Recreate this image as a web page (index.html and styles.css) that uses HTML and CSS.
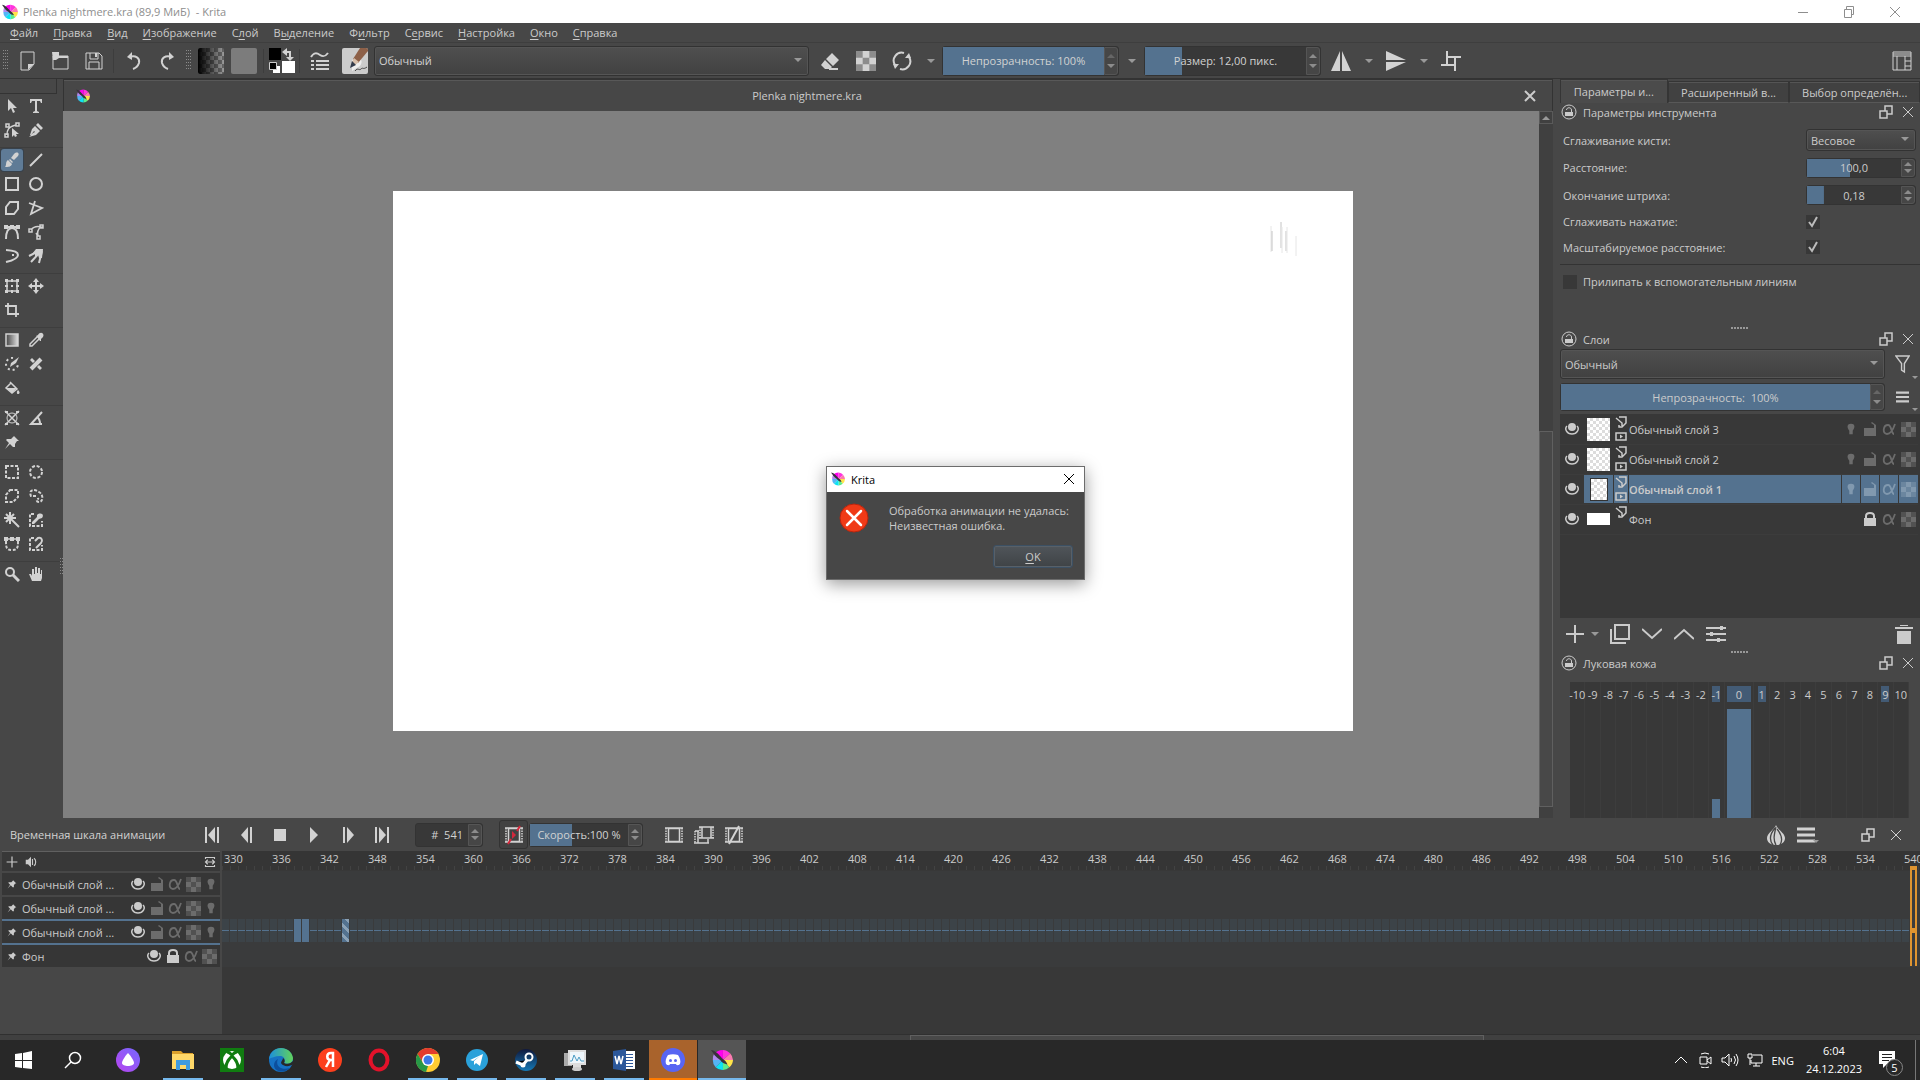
FILE: index.html
```html
<!DOCTYPE html>
<html lang="ru">
<head>
<meta charset="UTF-8">
<meta name="viewport" content="width=device-width, initial-scale=1.0">
<title>Plenka nightmere.kra (89,9 МиБ) - Krita</title>
<link rel="stylesheet" href="styles.css">
</head>
<body>
<!-- shared icons -->
<svg class="defs" aria-hidden="true">
  <defs>
    <linearGradient id="gray"><stop offset="0" stop-color="#444"/><stop offset="1" stop-color="#ddd"/></linearGradient>
    <linearGradient id="black"><stop offset="0" stop-color="#000"/><stop offset="1" stop-color="#000" stop-opacity="0"/></linearGradient>
    <linearGradient id="violet" x1="0" y1="1" x2="1" y2="0"><stop offset="0" stop-color="#b844ee"/><stop offset="1" stop-color="#7468ff"/></linearGradient>
    <linearGradient id="edgeg" x1="0" y1="0" x2="1" y2="0"><stop offset="0" stop-color="#1b8fdd"/><stop offset="1" stop-color="#62d35a"/></linearGradient>
    <linearGradient id="steamg" x1="0" y1="0" x2="0" y2="1"><stop offset="0" stop-color="#10183c"/><stop offset="1" stop-color="#1579b5"/></linearGradient>
    <pattern id="checks" width="8" height="8" patternUnits="userSpaceOnUse"><path fill="#9a9a9a" d="M0 0h8v8H0z"/><path fill="#666" d="M0 0h4v4H0zM4 4h4v4H4z"/></pattern>
  </defs>
  <symbol id="krita" viewBox="0 0 24 24">
    <path fill="#f0e" d="M13 12 3 6a12 11 0 0 1 10-5z"/><path fill="#f3d" d="M13 12V1a11 11 0 0 1 8 4z"/><path fill="#fb7bb0" d="m13 12 8-7a11 11 0 0 1 3 7z"/>
    <path fill="#ffe34a" d="M13 12h11a11 11 0 0 1-4 8z"/><path fill="#5dec8a" d="m13 12 7 8a11 11 0 0 1-7 3z"/><path fill="#0ee3f4" d="M13 12v11a11 11 0 0 1-8-3z"/><path fill="#55b4f5" d="m13 12-8 8a11 11 0 0 1-3-8z"/><path fill="#b08af0" d="M13 12H2a11 11 0 0 1 1-6z"/>
    <path fill="#38323c" d="M0 1c4 0 9 5 12 9 3 2 5 4 6 7-4-1-6-2-8-5C5 9 3 5 0 1z"/>
  </symbol>
  <symbol id="new" viewBox="0 0 20 20"><path d="M3 1h13v12l-5 6H3z"/><path class="f" d="M10 19v-6h6z"/></symbol>
  <symbol id="open" viewBox="0 0 20 20"><path d="M2 5h15v13H2z"/><path class="f" d="M1 1h7v4h9v2H8L5 9H2z"/></symbol>
  <symbol id="save" viewBox="0 0 20 20"><path d="M2 2h13l3 3v13H2zM5 18v-7h10v7M6 2v6h8V2"/><path class="f" d="M11 2h2v4h-2z"/></symbol>
  <symbol id="undo" viewBox="0 0 20 20"><path stroke-width="2" d="M5 6c7-2 11 1 10 6-1 3-3 5-6 6"/><path class="f" d="M8 1v8L3 6z"/></symbol>
  <symbol id="redo" viewBox="0 0 20 20"><path stroke-width="2" d="M15 6C8 4 4 7 5 12c1 3 3 5 6 6"/><path class="f" d="M12 1v8l5-3z"/></symbol>
  <symbol id="brushset" viewBox="0 0 20 20"><path stroke-width="2" d="M1 6c3-5 6-4 9-2 3 2 5 2 8-2M6 10h13M6 14h13M6 18h13M1 10h3M1 14h3M1 18h3"/></symbol>
  <symbol id="eraser" viewBox="0 0 20 20"><path class="f" d="m12 2 7 7-6 6-7-7zM5 9l7 7-2 2H5l-4-4zM9 17h9v2H9z"/></symbol>
  <symbol id="checker" viewBox="0 0 15 15"><path class="f" opacity=".5" d="M0 0h15v15H0z"/><path class="f" d="M5 0h5v5H5zM0 5h5v5H0zM10 5h5v5h-5zM5 10h5v5H5z"/></symbol>
  <symbol id="reload" viewBox="0 0 20 20"><path stroke-width="2" d="M3 14A8 8 0 0 1 12 2M17 6A8 8 0 0 1 8 18"/><path class="f" d="m1 13 6 0-4 5zM19 7l-6 0 4-5z"/></symbol>
  <symbol id="mirrorh" viewBox="0 0 20 20"><path class="f" d="M9 0v20H0zM11 0v20h9z"/></symbol>
  <symbol id="mirrorv" viewBox="0 0 20 20"><path class="f" d="M0 0v9h20zM0 20v-9h20z"/></symbol>
  <symbol id="wrap" viewBox="0 0 20 20"><path stroke-width="2" d="M6 0v14M0 14h14M6 6h14M14 6v14"/></symbol>
  <symbol id="workspace" viewBox="0 0 20 20"><path d="M1 1h18v18H1zM1 5h18M5 5v14M13 5v14M13 10h6M13 15h6M1 3h18"/></symbol>
  <symbol id="min" viewBox="0 0 12 12"><path d="M1 6.5h10"/></symbol>
  <symbol id="max" viewBox="0 0 12 12"><path d="M1.500 3.500h7v8h-7zM3.500 3V.5h7v8H9"/></symbol>
  <symbol id="close" viewBox="0 0 12 12"><path d="m1 1 10 10M11 1 1 11"/></symbol>
  <symbol id="float" viewBox="0 0 16 16"><path stroke-width="1.500" d="M2 7h7v7H2zM7 7V2h7v8H9"/></symbol>
  <symbol id="docklock" viewBox="0 0 16 16"><circle cx="8" cy="8" r="7"/><path class="f" d="M4 8h8v4H4z"/><path d="M5.500 6c0-3 5-3 5 0v2"/></symbol>
  <symbol id="select" viewBox="0 0 16 16"><path class="f" d="M4 1v12l3-3 2 5 2-1-2-4h4z"/></symbol>
  <symbol id="text" viewBox="0 0 16 16"><path class="f" d="M2 1h12v4h-1l-1-2H9v10l2 1v1H5v-1l2-1V3H4L3 5H2z"/></symbol>
  <symbol id="shape" viewBox="0 0 16 16"><path stroke-width="1.500" d="M3 13c0-5 1-8 9-10M1 12h3v3H1zM2 2h3v3H2zM12 1h3v3h-3z"/><path class="f" d="M8 6v9l2-2 1 2 2-1-1-2h3z"/></symbol>
  <symbol id="pen" viewBox="0 0 16 16"><path class="f" d="M10 1 15 6l-2 2-5-5zM7 4l5 5-4 4-7 2 4-4 2-1-1-1-3 4-1 0 2-6z"/></symbol>
  <symbol id="brush" viewBox="0 0 16 16"><path class="f" d="M10 2c3-3 6-1 4 2l-4 4-3-2zM6 7l3 3-1 1-3-3zM4 8l4 4c-1 3-4 3-7 3 2-2 0-5 3-7z"/></symbol>
  <symbol id="line" viewBox="0 0 16 16"><path stroke-width="2" d="M2 14 14 2"/></symbol>
  <symbol id="rect" viewBox="0 0 16 16"><path stroke-width="2" d="M2 2h12v12H2z"/></symbol>
  <symbol id="ellipse" viewBox="0 0 16 16"><circle cx="8" cy="8" r="6" stroke-width="2"/></symbol>
  <symbol id="polygon" viewBox="0 0 16 16"><path stroke-width="2" d="m6 2 8 0v7l-4 5H2V7z"/></symbol>
  <symbol id="polyline" viewBox="0 0 16 16"><path stroke-width="1.800" d="M1 3 14 8 3 14 7 1"/></symbol>
  <symbol id="bezier" viewBox="0 0 16 16"><path stroke-width="2" d="M2 15c0-8 2-11 6-11s6 3 6 11M1 3h14"/><path class="f" d="M0 1h4v4H0zM6 1h4v4H6zM12 1h4v4h-4z"/></symbol>
  <symbol id="freepath" viewBox="0 0 16 16"><path stroke-width="1.500" d="M3 6c3-4 6-4 10-3-3 2-4 5-3 9L8 9M1 5h3v3H1zM12 1h3v3h-3zM9 12h3v3H9z"/></symbol>
  <symbol id="dyna" viewBox="0 0 16 16"><path stroke-width="2" d="M2 2c16 1 16 8 0 12"/><path class="f" d="M8 6h2v2H8z"/></symbol>
  <symbol id="multi" viewBox="0 0 16 16"><path stroke-width="2" d="m1 8 12-6M3 14 14 2M11 15l3-12"/><path class="f" d="m8 1 7 0-1 9-3 0-1-3-3 3 0-4-3 0z"/></symbol>
  <symbol id="transform" viewBox="0 0 16 16"><path stroke-width="1.500" d="M3 3h10v10H3z"/><path class="f" d="M1 1h3v3H1zM12 1h3v3h-3zM1 12h3v3H1zM12 12h3v3h-3zM7 1h2v3H7zM7 12h2v3H7zM1 7h3v2H1zM12 7h3v2h-3zM7 7h2v2H7z"/></symbol>
  <symbol id="move" viewBox="0 0 16 16"><path stroke-width="2" d="M8 2v12M2 8h12"/><path class="f" d="m8 0 3 4H5zM8 16l3-4H5zM0 8l4-3v6zM16 8l-4-3v6z"/></symbol>
  <symbol id="crop" viewBox="0 0 16 16"><path stroke-width="1.800" d="M4 1v11h11M1 4h11v11"/></symbol>
  <symbol id="gradient" viewBox="0 0 16 16"><path fill="url(#gray)" d="M2 2h12v12H2z" stroke-width="1.500"/></symbol>
  <symbol id="picker" viewBox="0 0 16 16"><path stroke-width="1.500" d="m9 5-7 7v2h2l7-7"/><path class="f" d="m8 4 2-1c2-4 7-2 5 2l-2 2 0 2-1 0z"/></symbol>
  <symbol id="colorize" viewBox="0 0 16 16"><path stroke-width="2" stroke-dasharray="2 3" d="M9 2a6 6 0 1 0 5 6"/><path class="f" d="m15 1-3 6-3 2-3 2 1-4z"/></symbol>
  <symbol id="patch" viewBox="0 0 16 16"><path stroke-width="4" d="m3 13 10-10"/><path class="f" d="m2 4 2-2 3 3-2 2zM14 12l-2 2-3-3 2-2z"/></symbol>
  <symbol id="fill" viewBox="0 0 16 16"><path stroke-width="1.500" d="m6 2 7 7-5 4-6-5 5-5"/><path class="f" d="M2 8h11l-5 5zM14 10c3 3 1 4 0 4s-2-2 0-4z"/></symbol>
  <symbol id="assist" viewBox="0 0 16 16"><path stroke-width="1.500" d="m1 1 14 14M15 1 1 15"/><circle cx="8" cy="8" r="5"/><path class="f" d="M1 1h3v2H1zM12 1h3v2h-3zM1 13h3v2H1zM12 13h3v2h-3z"/></symbol>
  <symbol id="measure" viewBox="0 0 16 16"><path stroke-width="2" d="M14 2 3 14h11M9 7c3 2 3 4 3 7"/></symbol>
  <symbol id="pin" viewBox="0 0 16 16"><path class="f" d="m9 1 6 6-2 0-2 3 0 3-2 0-3-3-5 5 4-6-3-3 1-1 4 0 3-3z"/></symbol>
  <symbol id="selrect" viewBox="0 0 16 16"><path stroke-width="2" stroke-dasharray="3 1.500" d="M2 2h12v12H2z"/></symbol>
  <symbol id="selell" viewBox="0 0 16 16"><circle cx="8" cy="8" r="6" stroke-width="2" stroke-dasharray="3 1.700"/></symbol>
  <symbol id="selpoly" viewBox="0 0 16 16"><path stroke-width="2" stroke-dasharray="3 1.500" d="M6 2h8v7l-5 5H2V7z"/></symbol>
  <symbol id="selfree" viewBox="0 0 16 16"><path stroke-width="2" stroke-dasharray="3 1.500" d="M8 8H3c-3-7 4-7 8-4 5 3 4 10 0 10-3 0-3-4 0-3"/></symbol>
  <symbol id="wand" viewBox="0 0 16 16"><path stroke-width="2" d="M6 0v12M0 6h12M2 2l13 13M10 2l-8 8"/></symbol>
  <symbol id="selsim" viewBox="0 0 16 16"><path stroke-width="2" stroke-dasharray="3 1.500" d="M6 2H2v12h12V9"/><path class="f" d="M4 10 9 5l0-2c3-3 8-1 5 3l-3 1-5 5H4z"/></symbol>
  <symbol id="selbez" viewBox="0 0 16 16"><path stroke-width="2" stroke-dasharray="3 1.500" d="M2 5c0 6 0 9 6 9s6-3 6-9"/><path stroke-width="1.500" d="M1 3h14"/><path class="f" d="M0 1h4v4H0zM6 1h4v4H6zM12 1h4v4h-4z"/></symbol>
  <symbol id="selmag" viewBox="0 0 16 16"><path stroke-width="2" stroke-dasharray="3 1.500" d="M6 2H2v12h12V9"/><path stroke-width="2" d="m7 5 3-3c4-1 5 3 3 5l-5 5"/></symbol>
  <symbol id="zoomt" viewBox="0 0 16 16"><circle cx="6" cy="6" r="4" stroke-width="2"/><path stroke-width="3" d="m9 9 6 6"/></symbol>
  <symbol id="hand" viewBox="0 0 16 16"><path class="f" d="M4 15 1 8l2 0 1 2V3h2v5l1 0V1h2v6l1 0V2h2v6l1 0V4h1v8l-1 3z"/></symbol>
  <symbol id="funnel" viewBox="0 0 16 20"><path stroke-width="1.500" d="M1 1h14L10 9v9l-3-2V9z"/></symbol>
  <symbol id="menu" viewBox="0 0 18 16"><path stroke-width="3" d="M0 2h18M0 8h18M0 14h18"/></symbol>
  <symbol id="eye" viewBox="0 0 16 16"><path stroke-width="1.500" d="M3 5C0 8 3 13 8 13s8-5 5-8"/><circle class="f" cx="8" cy="6" r="4"/></symbol>
  <symbol id="paint" viewBox="0 0 12 12"><path stroke-width="1.500" d="M4 1h7v6l-4 4H4V9M1 2l6 5v3"/></symbol>
  <symbol id="anim" viewBox="0 0 12 9"><path stroke-width="1.500" d="M1 1h10v7H1z"/><path class="f" d="M5 2.500 8 4.500 5 6.500z"/></symbol>
  <symbol id="bulb" viewBox="0 0 10 14"><path class="f" d="M5 1c6 0 4 6 2 8v4H3V9C1 7-1 1 5 1z"/></symbol>
  <symbol id="unlock" viewBox="0 0 14 14"><path class="f" d="M1 6h10V3L8 1l1-1 4 3v11H1z"/></symbol>
  <symbol id="lock" viewBox="0 0 14 14"><path class="f" d="M1 6h12v8H1z"/><path stroke-width="2" d="M3 7V4c0-4 8-4 8 0v3"/></symbol>
  <symbol id="alpha" viewBox="0 0 14 14"><path stroke-width="1.800" d="M13 2c-2 6-5 10-8 10-5 0-4-9 1-9 4 0 3 9 6 9"/></symbol>
  <symbol id="plus" viewBox="0 0 20 20"><path stroke-width="2" d="M10 1v18M1 10h18"/></symbol>
  <symbol id="dup" viewBox="0 0 20 20"><path stroke-width="2" d="M5 1h14v14H5zM1 5v14h15"/></symbol>
  <symbol id="down" viewBox="0 0 20 20"><path stroke-width="2" d="m0 5 10 9 10-9"/></symbol>
  <symbol id="up" viewBox="0 0 20 20"><path stroke-width="2" d="m0 15 10-9 10 9"/></symbol>
  <symbol id="props" viewBox="0 0 20 20"><path stroke-width="2" d="M0 4h20M0 10h20M0 16h20"/><path class="f" d="M14 2h3v4h-3zM4 8h3v4H4zM11 14h3v4h-3z"/></symbol>
  <symbol id="trash" viewBox="0 0 20 20"><path class="f" d="M1 3h18v2H1zM6 1h8v1H6zM3 7h14v13H3z"/></symbol>
  <symbol id="first" viewBox="0 0 16 16"><path class="f" d="M1 0h2v16H1zM13 0h2v16h-2zM11 0v16L4 8z"/></symbol>
  <symbol id="prev" viewBox="0 0 16 16"><path class="f" d="M12 0h2v16h-2zM10 0v16L3 8z"/></symbol>
  <symbol id="stop" viewBox="0 0 16 16"><path class="f" d="M2 2h12v12H2z"/></symbol>
  <symbol id="play" viewBox="0 0 16 16"><path class="f" d="m4 0 8 8-8 8z"/></symbol>
  <symbol id="next" viewBox="0 0 16 16"><path class="f" d="M3 0h2v16H3zM7 0l7 8-7 8z"/></symbol>
  <symbol id="last" viewBox="0 0 16 16"><path class="f" d="M13 0h2v16h-2zM1 0h2v16H1zM5 0l7 8-7 8z"/></symbol>
  <symbol id="film" viewBox="0 0 18 16"><path stroke-width="1.500" d="M3.500 1.500h11v13h-11zM0 1h18M0 15h18"/><path stroke-width="1.500" stroke-dasharray="1.500 1" d="M1 1v14M17 1v14"/></symbol>
  <symbol id="film2" viewBox="0 0 20 18"><path stroke-width="1.500" d="M8 1h9v11H8zM5 1h15M5 12h15M5 5H1M0 17h15M4 5v12M14 13v4"/><path stroke-width="1.500" stroke-dasharray="1.500 1" d="M6 1v11M19 1v11M1 5v12"/></symbol>
  <symbol id="onion" viewBox="0 0 20 20"><path class="f" d="M10 0c1 4 9 8 9 13 0 4-3 7-9 7s-9-3-9-7C1 8 9 4 10 0z"/><path stroke="#474747" stroke-width="1.300" d="M9 3C4 9 3 15 7 20M10 2c-2 8-3 13 0 18M11 4c5 6 6 11 3 16"/></symbol>
  <symbol id="sound" viewBox="0 0 16 16"><path class="f" d="M1 5h3l4-4v14l-4-4H1z"/><path stroke-width="1.500" d="M10 4v8M12 3c3 2 3 8 0 10"/></symbol>
  <symbol id="fit" viewBox="0 0 16 16"><path stroke-width="1.500" d="M2 4V2h12v2M2 12v2h12v-2M2 8h12M5 5 2 8l3 3M11 5l3 3-3 3"/></symbol>
</svg>

<header class="titlebar">
  <svg class="i i16"><use href="#krita"/></svg>
  <span>Plenka nightmere.kra (89,9 МиБ)&nbsp; - Krita</span>
  <div class="window-buttons">
    <button title="Свернуть"><svg class="i i12"><use href="#min"/></svg></button>
    <button title="Развернуть"><svg class="i i12"><use href="#max"/></svg></button>
    <button title="Закрыть"><svg class="i i12"><use href="#close"/></svg></button>
  </div>
</header>

<nav class="menubar">
  <a href="#"><u>Ф</u>айл</a>
  <a href="#"><u>П</u>равка</a>
  <a href="#"><u>В</u>ид</a>
  <a href="#"><u>И</u>зображение</a>
  <a href="#">С<u>л</u>ой</a>
  <a href="#">В<u>ы</u>деление</a>
  <a href="#">Ф<u>и</u>льтр</a>
  <a href="#">С<u>е</u>рвис</a>
  <a href="#"><u>Н</u>астройка</a>
  <a href="#"><u>О</u>кно</a>
  <a href="#"><u>С</u>правка</a>
</nav>

<div class="toolbar">
  <span class="grip"></span>
  <button title="Создать"><svg class="i i20"><use href="#new"/></svg></button>
  <button title="Открыть"><svg class="i i20"><use href="#open"/></svg></button>
  <button title="Сохранить"><svg class="i i20"><use href="#save"/></svg></button>
  <span class="sep"></span>
  <button title="Отменить"><svg class="i i20"><use href="#undo"/></svg></button>
  <button title="Повторить"><svg class="i i20"><use href="#redo"/></svg></button>
  <span class="grip"></span>
  <button title="Градиент"><svg class="swatch"><rect width="26" height="26" fill="url(#checks)"/><rect width="26" height="26" fill="url(#black)"/></svg></button>
  <button title="Текстура"><svg class="swatch"><rect width="26" height="26" fill="#7c7c7c"/></svg></button>
  <span class="sep"></span>
  <button class="colors" title="Цвета">
    <svg width="28" height="28"><path d="M1 1h12v12H1z"/><path fill="#fff" d="M14 14h13v12H14zM5 19h7v7H5z"/><path stroke="#ccc" d="M1.500 15.500h7v7h-7z"/><path stroke="#d2d2d2" stroke-width="2" fill="none" d="M17 5h5v6"/><path fill="#d2d2d2" d="m14 5 5-4v8zM22 14l-4-4h8z"/></svg>
  </button>
  <span class="sep"></span>
  <button title="Параметры кисти"><svg class="i i20"><use href="#brushset"/></svg></button>
  <button class="wide" title="Профиль кисти">
    <svg class="swatch"><path fill="#ccc" d="M0 0h26v26H0z"/><path fill="#eee" d="M10 12c8-4 12 0 8 6l-8 5z"/><path fill="#8d6048" d="M18 0h8v3L16 15l-5-4z"/><path fill="#d8c0ac" d="m12 10 5 4-4 3-3-3z"/><path fill="#333c4c" d="m10 13 4 4-6 3z"/><path fill="none" stroke="#444" d="M13 23c3-4 4 0 6-2s2 1 6-2"/></svg>
  </button>
  <label class="combo blend"><select aria-label="Режим смешивания"><option>Обычный</option></select></label>
  <button class="mid" title="Ластик"><svg class="i i20"><use href="#eraser"/></svg></button>
  <button class="mid" title="Сохранять прозрачность"><svg class="i i20"><use href="#checker"/></svg></button>
  <button class="mid" title="Перезагрузить"><svg class="i i20"><use href="#reload"/></svg></button>
  <span class="drop"></span>
  <label class="slider"><input type="text" aria-label="Непрозрачность" value="Непрозрачность: 100%" style="--fill:100%"><span class="spin off"></span></label>
  <span class="drop large"></span>
  <label class="slider size"><input type="text" aria-label="Размер" value="Размер: 12,00 пикс." style="--fill:23%"><span class="spin"></span></label>
  <button class="mid" title="Отразить по горизонтали"><svg class="i i20"><use href="#mirrorh"/></svg></button>
  <span class="drop small"></span>
  <button class="mid" title="Отразить по вертикали"><svg class="i i20"><use href="#mirrorv"/></svg></button>
  <span class="drop small"></span>
  <button class="mid" title="Циклический режим"><svg class="i i20"><use href="#wrap"/></svg></button>
  <button class="mid end" title="Рабочее пространство"><svg class="i i20"><use href="#workspace"/></svg></button>
</div>

<main class="workspace">
  <aside class="toolbox">
    <div class="toolbox-head"></div>
    <div class="tools" id="tools"></div>
    <span class="grip"></span>
  </aside>

  <section class="document">
    <div class="doc-tab">
      <svg class="i i14"><use href="#krita"/></svg>
      <span>Plenka nightmere.kra</span>
      <button title="Закрыть"><svg class="i i12 bold"><use href="#close"/></svg></button>
    </div>
    <div class="view">
      <div class="canvas">
        <div class="sheet">
          <svg class="strokes" viewBox="0 0 30 36"><path d="M2 5v26M27 15v20"/><path class="dark" d="M3 10v20M12 1v26M17 10v20"/><path d="M13 6v26M18 6v26"/></svg>
        </div>
      </div>
      <div class="vscroll"><span class="arrow"></span><span class="thumb"></span></div>
    </div>
  </section>

  <aside class="docks">
    <div class="tabs">
      <button class="active">Параметры и...</button>
      <button>Расширенный в...</button>
      <button class="last">Выбор определён...</button>
    </div>
    <section class="dock options">
      <h2><svg class="i i16"><use href="#docklock"/></svg>Параметры инструмента<button title="Открепить"><svg class="i i16"><use href="#float"/></svg></button><button title="Закрыть"><svg class="i i12"><use href="#close"/></svg></button></h2>
      <div class="fields">
        <label for="smooth">Сглаживание кисти:</label>
        <span class="combo"><select id="smooth"><option>Весовое</option></select></span>
        <label for="dist">Расстояние:</label>
        <span class="slider"><input id="dist" type="text" value="100,0" style="--fill:46%"><span class="spin"></span></span>
        <label for="finish">Окончание штриха:</label>
        <span class="slider"><input id="finish" type="text" value="0,18" style="--fill:18%"><span class="spin"></span></span>
        <label for="press">Сглаживать нажатие:</label>
        <input id="press" type="checkbox" checked>
        <label for="scale">Масштабируемое расстояние:</label>
        <input id="scale" type="checkbox" checked>
      </div>
      <label class="snap"><input type="checkbox">Прилипать к вспомогательным линиям</label>
    </section>
    <div class="splitter"></div>
    <section class="dock layers">
      <h2><svg class="i i16"><use href="#docklock"/></svg>Слои<button title="Открепить"><svg class="i i16"><use href="#float"/></svg></button><button title="Закрыть"><svg class="i i12"><use href="#close"/></svg></button></h2>
      <div class="layer-row">
        <label class="combo"><select aria-label="Режим смешивания слоя"><option>Обычный</option></select></label>
        <button class="has-drop" title="Фильтр"><svg class="i" width="15" height="19"><use href="#funnel"/></svg></button>
      </div>
      <div class="layer-row opacity">
        <label class="slider"><input type="text" aria-label="Непрозрачность слоя" value="Непрозрачность:&nbsp; 100%" style="--fill:100%"><span class="spin off"></span></label>
        <button class="has-drop" title="Меню"><svg class="i" width="13" height="12"><use href="#menu"/></svg></button>
      </div>
      <ul class="layer-list" id="layers"></ul>
      <div class="layer-actions">
        <button title="Добавить"><svg class="i i20"><use href="#plus"/></svg></button>
        <span class="drop small"></span>
        <button title="Дублировать"><svg class="i i20"><use href="#dup"/></svg></button>
        <button title="Ниже"><svg class="i i20"><use href="#down"/></svg></button>
        <button title="Выше"><svg class="i i20"><use href="#up"/></svg></button>
        <button title="Свойства"><svg class="i i20"><use href="#props"/></svg></button>
        <button class="end" title="Удалить"><svg class="i i20"><use href="#trash"/></svg></button>
      </div>
    </section>
    <div class="splitter"></div>
    <section class="dock onion">
      <h2><svg class="i i16"><use href="#docklock"/></svg>Луковая кожа<button title="Открепить"><svg class="i i16"><use href="#float"/></svg></button><button title="Закрыть"><svg class="i i12"><use href="#close"/></svg></button></h2>
      <div class="skins" id="skins"></div>
    </section>
  </aside>
</main>

<section class="timeline">
  <div class="timeline-bar">
    <h2>Временная шкала анимации</h2>
    <button title="В начало"><svg class="i i16"><use href="#first"/></svg></button>
    <button title="Предыдущий кадр"><svg class="i i16"><use href="#prev"/></svg></button>
    <button title="Стоп"><svg class="i i16"><use href="#stop"/></svg></button>
    <button title="Воспроизвести"><svg class="i i16"><use href="#play"/></svg></button>
    <button title="Следующий кадр"><svg class="i i16"><use href="#next"/></svg></button>
    <button title="В конец"><svg class="i i16"><use href="#last"/></svg></button>
    <label class="slider frame"><input type="text" aria-label="Кадр" value="#&nbsp; 541" style="--fill:0%"><span class="spin"></span></label>
    <button class="dropframes" title="Пропускать кадры"><svg class="i" width="18" height="20" viewBox="0 0 18 20"><use href="#film" y="2" width="18" height="16"/><path class="red" d="m3 19 3-5M12 6l3-5"/><path fill="#d4283c" stroke="none" d="m7 6 4 4-4 4z"/></svg></button>
    <label class="slider speed"><input type="text" aria-label="Скорость" value="Скорость:100 %" style="--fill:43%"><span class="spin"></span></label>
    <button class="cell first" title="Кадр"><svg class="i" width="18" height="16"><use href="#film"/></svg></button>
    <button class="cell" title="Дублировать кадр"><svg class="i" width="20" height="18"><use href="#film2"/></svg></button>
    <button class="cell" title="Удалить кадр"><svg class="i" width="18" height="20" viewBox="0 0 18 20"><use href="#film" y="2" width="18" height="16"/><path stroke-width="2" d="M4 19 14 1"/></svg></button>
    <button class="cell end" title="Луковая кожа"><svg class="i i20"><use href="#onion"/></svg></button>
    <button class="cell has-drop" title="Меню"><svg class="i" width="18" height="16"><use href="#menu"/></svg></button>
    <button class="cell gap" title="Открепить"><svg class="i i16"><use href="#float"/></svg></button>
    <button class="cell close" title="Закрыть"><svg class="i i12"><use href="#close"/></svg></button>
  </div>
  <div class="timeline-body">
    <div class="tracks">
      <div class="tracks-head">
        <svg class="i i12"><use href="#plus"/></svg><svg class="i i12"><use href="#sound"/></svg><svg class="i i12 end"><use href="#fit"/></svg>
      </div>
      <div id="tracks"></div>
    </div>
    <div class="frames">
      <div class="ruler" id="ruler"></div>
      <div class="row"></div>
      <div class="row"></div>
      <div class="row keys" id="keys"></div>
      <div class="row"></div>
      <div class="playhead"></div>
    </div>
  </div>
  <div class="hscroll"><span class="thumb"></span></div>
</section>

<footer class="taskbar">
  <button title="Пуск"><svg width="18" height="18"><path fill="#fff" d="m0 3 7-1v7H0zM8 2l9-2v9H8zM0 10h7v7l-7-1zM8 10h9v8l-9-1z"/></svg></button>
  <button title="Поиск"><svg width="18" height="18"><g fill="none" stroke="#fff" stroke-width="1.500"><circle cx="11" cy="7" r="5.500"/><path d="m7 11-6 6"/></g></svg></button>
  <button class="alice" title="Алиса"><svg width="26" height="26"><circle cx="13" cy="13" r="12" fill="url(#violet)"/><path fill="#fff" d="M13 6c3 3 6 8 6 10 0 4-12 4-12 0 0-2 3-7 6-10z"/></svg></button>
  <button class="run" title="Проводник"><svg width="24" height="24"><path fill="#dba02c" d="M1 3h9l2 2h10v4H1z"/><path fill="#ffd869" d="M1 6h22v15H1z"/><path fill="#3f9be0" d="M5 12h14v10h-4v-5H9v5H5z"/></svg></button>
  <button title="Xbox"><svg width="24" height="24"><path fill="#107c10" d="M0 0h24v24H0z"/><circle cx="12" cy="12" r="9" fill="#fff"/><path fill="none" stroke="#107c10" stroke-width="3" d="M6 20c0-6 3-9 6-12 3 3 6 6 6 12M7 4c2 0 4 2 5 3 1-1 3-3 5-3"/></svg></button>
  <button class="run" title="Edge"><svg width="26" height="26"><circle cx="13" cy="13" r="12" fill="#1672c4"/><path fill="url(#edgeg)" d="M1 12C3-3 23-2 25 11c0 5-5 7-9 5 2-3 0-7-4-7-5 0-9 2-11 3z"/><path fill="#282828" d="M16 16c4 2 7 0 9-2v3c-3 3-10 3-12-1 0-2 2-3 2-5 2 1 2 4 1 5z"/><path fill="#0c4f9d" d="M10 12c-3 6 2 12 12 9-6 6-16 4-16-3 0-3 2-5 4-6z"/></svg></button>
  <button title="Яндекс"><svg width="24" height="24"><circle cx="12" cy="12" r="12" fill="#fc3f1d"/><path fill="none" stroke="#fff" stroke-width="2.500" d="M15 19V5h-2c-5 0-5 7 0 7h2M12 12l-4 7"/></svg></button>
  <button title="Opera"><svg width="24" height="24"><ellipse cx="12" cy="12" rx="8.500" ry="9.500" fill="none" stroke="#e3122a" stroke-width="4"/></svg></button>
  <button class="run" title="Chrome"><svg width="24" height="24"><circle cx="12" cy="12" r="12" fill="#fc3"/><path fill="#e33b2e" d="M1.600 6a12 12 0 0 1 20.800 0H12l-5 9z"/><path fill="#279847" d="M1.600 6 7 15l5 3-2 6A12 12 0 0 1 1.600 6z"/><circle cx="12" cy="12" r="6" fill="#fff"/><circle cx="12" cy="12" r="4.500" fill="#3b78e7"/></svg></button>
  <button class="run" title="Telegram"><svg width="24" height="24"><circle cx="12" cy="12" r="11" fill="#2aa1da"/><path fill="#fff" d="m5 12 13-6-3 12-4-3-2 2v-4l6-5-7 5z"/></svg></button>
  <button class="run" title="Steam"><svg width="24" height="24"><circle cx="12" cy="12" r="11" fill="url(#steamg)"/><circle cx="15" cy="9" r="3.500" fill="none" stroke="#fff" stroke-width="2"/><path stroke="#fff" stroke-width="3" d="m2 14 7 3 4-5"/><circle cx="9" cy="17" r="2.500" fill="#fff"/></svg></button>
  <button class="run" title="Монитор ресурсов"><svg width="24" height="24"><path fill="#aaa" d="M1 5h8v13H1z"/><path fill="#ddd" d="M5 2h18v15H5zM10 17h8v3h-8z"/><path fill="#eef6fb" d="M7 4h14v11H7z"/><path fill="none" stroke="#4a9cc4" d="M7 13h2l2-6 3 6 2-4 2 4h3"/><ellipse cx="14" cy="21" rx="5" ry="2" fill="#ccc"/></svg></button>
  <button class="run word" title="Word"><svg width="24" height="24"><path fill="#fff" d="M12 3h11v18H12z"/><path stroke="#2b579a" d="M14 6.500h7M14 9.500h7M14 12.500h7M14 15.500h7M14 18.500h7"/><path fill="#2b579a" d="m1 3 13-2v22L1 21z"/><path fill="none" stroke="#fff" stroke-width="1.500" d="m3 8 2 8 2-8 2 8 2-8"/></svg></button>
  <button class="run discord" title="Discord"><svg width="24" height="24"><circle cx="12" cy="12" r="12" fill="#5865f2"/><path fill="#fff" d="M7 7c3-1 7-1 10 0 2 3 3 6 2 9-2 2-4 1-4 0H9c0 1-2 2-4 0-1-3 0-6 2-9z"/><circle cx="9.500" cy="12.500" r="1.500" fill="#5865f2"/><circle cx="14.500" cy="12.500" r="1.500" fill="#5865f2"/></svg></button>
  <button class="run current" title="Krita"><svg width="22" height="22"><use href="#krita"/></svg></button>
  <div class="tray">
    <svg width="16" height="16"><path d="m2 11 6-6 6 6"/></svg>
    <svg width="16" height="16"><path d="M3 5h7v7H3zM10 8l4-3v7l-4-3M4 2q4-2 8 0M4 15q4 2 8 0"/></svg>
    <svg width="18" height="16"><path d="M1 6h3l4-4v12l-4-4H1zM10 6q1 2 0 4M13 4q3 4 0 8M15 2q4 6 0 12"/></svg>
    <svg width="16" height="16"><path d="M6 3h9v8H4V8M1 2h4v4H1zM3 6v7M6 14h7M9 11v3"/></svg>
    <span>ENG</span>
    <time>6:04<br>24.12.2023</time>
    <button class="notes" title="Уведомления"><svg width="17" height="17"><path fill="#fff" stroke="none" d="M0 0h16v13H8l-4 4v-4H0z"/><path stroke="#222" d="M3 3.500h10M3 6.500h10M3 9.500h7"/></svg><span>5</span></button>
  </div>
</footer>

<div class="dialog" role="alertdialog" aria-labelledby="dialog-title">
  <div class="dialog-title"><svg class="i i14"><use href="#krita"/></svg><span id="dialog-title">Krita</span><button title="Закрыть"><svg class="i i12"><use href="#close"/></svg></button></div>
  <div class="dialog-body">
    <svg width="30" height="30"><circle cx="15" cy="15" r="14" fill="#f03a17" stroke="#b8250e"/><path stroke="#fff" stroke-width="2.500" stroke-linecap="round" d="m8 8 14 14M22 8 8 22"/></svg>
    <p>Обработка анимации не удалась:<br>Неизвестная ошибка.</p>
    <button class="ok"><u>O</u>K</button>
  </div>
</div>
<script src="script.js"></script>
</body>
</html>
```
FILE: script.js
```js
const icon = (name, cls) => `<svg class="i ${cls}"><use href="#${name}"/></svg>`;

// toolbox, one array per group
const groups = [
  ['select', 'text', 'shape', 'pen'],
  ['brush', 'line', 'rect', 'ellipse', 'polygon', 'polyline', 'bezier', 'freepath', 'dyna', 'multi'],
  ['transform', 'move', 'crop'],
  ['gradient', 'picker', 'colorize', 'patch', 'fill'],
  ['assist', 'measure', 'pin'],
  ['selrect', 'selell', 'selpoly', 'selfree', 'wand', 'selsim', 'selbez', 'selmag'],
  ['zoomt', 'hand']
];
document.getElementById('tools').innerHTML = groups.map(group =>
  '<div class="group">' + group.map(t =>
    `<button class="${t === 'brush' ? 'active' : ''}" aria-label="${t}">${icon(t, 'i16')}</button>`).join('') + '</div>'
).join('');

// layers docker
const layers = [
  { name: 'Обычный слой 3' },
  { name: 'Обычный слой 2' },
  { name: 'Обычный слой 1', active: true },
  { name: 'Фон', locked: true }
];
document.getElementById('layers').innerHTML = layers.map(l => `
  <li class="${l.active ? 'active' : ''}">
    <span>${icon('eye', 'i16')}</span>
    <span class="preview"><i class="${l.locked ? 'solid' : l.active ? 'narrow' : ''}"></i></span>
    <span class="kind">${icon('paint', 'k1')}${l.locked ? '' : icon('anim', 'k2')}</span>
    <span class="name">${l.name}</span>
    <span class="dim">${l.locked ? '' : icon('bulb', 'i12')}</span>
    <span class="${l.locked ? '' : 'dim'}">${icon(l.locked ? 'lock' : 'unlock', 'i14')}</span>
    <span class="dim">${icon('alpha', 'i14')}</span>
    <span class="dim">${icon('checker', 'i15')}</span>
  </li>`).join('');

// timeline headers
document.getElementById('tracks').innerHTML = layers.map(l => `
  <div class="track ${l.active ? 'active' : ''}">
    ${icon('pin', 'i10')}<span>${l.locked ? l.name : 'Обычный слой ...'}</span>
    ${icon('eye', 'i16')}${icon(l.locked ? 'lock' : 'unlock', l.locked ? 'i14' : 'i14 dim')}
    ${icon('alpha', 'i14 dim')}${icon('checker', 'i15 dim')}${l.locked ? '' : icon('bulb', 'i12 dim')}
  </div>`).join('');

// onion skins
const visible = [-1, 0, 1, 9];
let skins = '';
for (let n = -10; n <= 10; n++) {
  const height = n === 0 ? 100 : n === -1 ? 17 : 0;
  skins += `<div class="${n === 0 ? 'zero' : ''}"><button class="${visible.includes(n) ? 'on' : ''}"><span>${n}</span></button><div class="level"><i style="height:${height}%"></i></div></div>`;
}
document.getElementById('skins').innerHTML = skins;

// frame numbers
let ruler = '';
for (let f = 330; f <= 540; f += 6) {
  ruler += `<span>${f}</span>`;
}
document.getElementById('ruler').innerHTML = ruler;

let keys = '';
for (let f = 330; f < 541; f++) {
  keys += `<i class="${f === 339 || f === 340 ? 'key' : f === 345 ? 'hold' : ''}"></i>`;
}
document.getElementById('keys').innerHTML = keys;
```
FILE: styles.css
```css
* {
  box-sizing: border-box;
}
body {
  margin: 0;
  height: 100vh;
  display: grid;
  grid-template-rows: 23px 20px 36px 1fr 222px 40px;
  grid-template-columns: 100%;
  overflow: hidden;
  position: relative;
  background: #474747;
  color: #cbcbcb;
  font: 11px/15px "Open Sans", "Noto Sans", sans-serif;
}
button, input, select {
  font: inherit;
  color: inherit;
  border: 0;
  padding: 0;
  margin: 0;
  background: none;
}
button {
  display: flex;
  align-items: center;
  justify-content: center;
}
h2, p, ul {
  margin: 0;
  padding: 0;
  font-size: 11px;
  font-weight: normal;
  list-style: none;
}

/* icons */
.defs {
  position: absolute;
  width: 0;
  height: 0;
}
.i {
  fill: none;
  stroke: currentColor;
  flex: none;
}
.f {
  fill: currentColor;
  stroke: none;
}
#krita path {
  stroke: none;
}
.i10 { width: 10px; height: 10px; }
.i12 { width: 12px; height: 12px; }
.i14 { width: 14px; height: 14px; }
.i15 { width: 15px; height: 15px; }
.i16 { width: 16px; height: 16px; }
.i20 { width: 20px; height: 20px; }
.bold { stroke-width: 2px; }
.dim { color: #6c6c6c; }
.end { margin-left: auto; }
.red { stroke: #d4283c; stroke-width: 2px; }

/* title and menu */
.titlebar {
  display: flex;
  align-items: center;
  gap: 5px;
  padding-left: 2px;
  background: #fff;
  color: #8e8e8e;
}
.window-buttons {
  display: flex;
  margin-left: auto;
  margin-right: 2px;
}
.window-buttons button {
  width: 46px;
}
.menubar {
  display: flex;
  align-items: center;
  gap: 15px;
  padding: 0 10px;
  border-bottom: 1px solid #3e3e3e;
}
.menubar a {
  color: inherit;
  text-decoration: none;
}
u {
  text-underline-offset: 2px;
}

/* toolbar */
.toolbar {
  display: flex;
  align-items: center;
  color: #d2d2d2;
  border-bottom: 1px solid #333;
}
.toolbar > button {
  width: 33px;
  height: 30px;
  flex: none;
}
.toolbar > .mid {
  width: 36px;
}
.toolbar > .wide {
  width: 38px;
}
.toolbar > .colors {
  width: 29px;
}
.grip {
  flex: none;
  width: 5px;
  height: 21px;
  margin: 0 3px;
  background: repeating-linear-gradient(transparent 0 1px, #474747 1px 3px), repeating-linear-gradient(90deg, #8a8a8a 0 1px, transparent 1px 2px);
}
.sep {
  width: 7px;
  height: 24px;
  flex: none;
  background: linear-gradient(#3d3d3d, #3d3d3d) center / 1px 100% no-repeat;
}
.swatch {
  width: 26px;
  height: 26px;
  border-radius: 2px;
}
.drop {
  width: 22px;
  flex: none;
  display: flex;
  justify-content: center;
}
.drop::after, .combo::after, .has-drop::after {
  content: "";
  border: 4px solid transparent;
  border-top: 4px solid #999;
  border-bottom: 0;
}
.drop.small {
  width: 19px;
}
.drop.large {
  width: 25px;
}
.combo {
  position: relative;
  display: flex;
  height: 30px;
  background: linear-gradient(#4f4f4f, #414141);
  border: 1px solid #323232;
  border-radius: 3px;
  box-shadow: inset 0 0 0 1px #555;
}
.combo select {
  appearance: none;
  width: 100%;
  padding: 0 4px;
}
.combo::after {
  position: absolute;
  right: 6px;
  top: calc(50% - 3px);
}
.blend {
  width: 435px;
  margin-right: 3px;
}
.slider {
  display: flex;
  height: 30px;
  border: 1px solid #333;
  border-radius: 3px;
  background: #383838;
}
.slider input {
  flex: 1;
  min-width: 0;
  text-align: center;
  background: linear-gradient(#54728f, #54728f) 0 0 / var(--fill) 100% no-repeat;
}
.spin {
  width: 14px;
  flex: none;
  display: flex;
  flex-direction: column;
  align-items: center;
  justify-content: center;
  gap: 6px;
  background: #464646;
  border: 1px solid #555;
  border-radius: 0 3px 3px 0;
}
.spin::before, .spin::after {
  content: "";
  border: 4px solid transparent;
  border-bottom: 4px solid #8c8c8c;
  border-top: 0;
}
.spin::after {
  border-top: 4px solid #8c8c8c;
  border-bottom: 0;
}
.spin.off::before {
  border-bottom-color: #666;
}
.toolbar .slider {
  width: 177px;
}
.toolbar .size {
  margin-right: 2px;
}

/* workspace */
.workspace {
  display: grid;
  grid-template-columns: 63px 1fr 367px;
  min-height: 0;
}
.toolbox {
  position: relative;
  color: #d2d2d2;
}
.toolbox > .grip {
  position: absolute;
  right: 0;
  bottom: 242px;
  margin: 0;
  width: 3px;
  height: 18px;
}
.toolbox-head {
  width: 57px;
  height: 15px;
  border: 1px solid #333;
  border-width: 0 1px 1px 0;
}
.group {
  display: grid;
  grid-template-columns: 24px 24px;
  grid-auto-rows: 24px;
}
.group + .group {
  margin-top: 5px;
  border-top: 1px solid #3e3e3e;
}
.group button {
  border-radius: 3px;
}
.group .active {
  margin: 1px;
  background: #5f7b96;
  box-shadow: 0 0 0 1px #38424c;
}
.document {
  display: flex;
  flex-direction: column;
  min-width: 0;
}
.doc-tab {
  flex: none;
  display: flex;
  align-items: center;
  justify-content: space-between;
  height: 32px;
  padding: 0 16px 0 12px;
  border: 1px solid #333;
  border-bottom: 0;
  box-shadow: inset 0 1px #585858;
}
.view {
  flex: 1;
  display: flex;
  min-height: 0;
}
.canvas {
  flex: 1;
  position: relative;
  overflow: hidden;
  background: #808080;
}
.sheet {
  position: absolute;
  left: 330px;
  top: 80px;
  width: 960px;
  height: 540px;
  background: #fff;
}
.strokes {
  position: absolute;
  right: 54px;
  top: 30px;
  width: 30px;
  height: 36px;
  stroke: #e6e6e6;
}
.strokes .dark {
  stroke: #c4c4c4;
}
.vscroll {
  width: 14px;
  background: #404040;
  display: flex;
  flex-direction: column;
}
.vscroll .arrow {
  height: 13px;
  border: 1px solid #5a5a5a;
  display: flex;
  align-items: center;
  justify-content: center;
}
.vscroll .arrow::after {
  content: "";
  border: 4px solid transparent;
  border-bottom: 4px solid #999;
  border-top: 0;
}
.vscroll .thumb {
  margin: auto 0 11px;
  height: 376px;
  background: #484848;
  border: 1px solid #606060;
}

/* dockers */
.docks {
  display: flex;
  flex-direction: column;
  min-height: 0;
  padding-left: 7px;
}
.tabs {
  display: flex;
  align-items: flex-end;
  height: 24px;
  flex: none;
}
.tabs button {
  flex: 1 1 121px;
  height: 22px;
  background: #414141;
  border: 1px solid #353535;
  border-bottom-color: #585858;
  box-shadow: inset 0 1px #555;
  white-space: nowrap;
}
.tabs .last {
  flex-basis: 130px;
}
.tabs .active {
  flex-basis: 107px;
  height: 24px;
  background: #4b4b4b;
  border-bottom: 0;
}
.dock h2 {
  display: flex;
  align-items: center;
  gap: 6px;
  height: 18px;
  padding: 0 4px 0 1px;
}
.dock h2 button:first-of-type {
  margin-left: auto;
}
.dock h2 button {
  min-width: 16px;
}
.options {
  flex: none;
  height: 222px;
}
.fields {
  display: grid;
  grid-template-columns: 1fr 110px;
  grid-template-rows: 28px 27px 28px 25px 26px;
  align-items: center;
  padding: 5px 4px 4px 3px;
  border-bottom: 1px solid #333;
  margin-bottom: 9px;
}
.fields .combo {
  height: 22px;
}
.fields .slider {
  height: 20px;
}
.fields .spin {
  gap: 3px;
}
input[type="checkbox"] {
  appearance: none;
  width: 14px;
  height: 14px;
  background: #383838;
}
input[type="checkbox"]:checked {
  background: #383838 url("data:image/svg+xml,%3Csvg xmlns='http://www.w3.org/2000/svg' viewBox='0 0 14 14'%3E%3Cpath fill='none' stroke='%23bbb' stroke-width='2' d='m3 7 3 4 5-9'/%3E%3C/svg%3E");
}
.snap {
  display: flex;
  align-items: center;
  gap: 6px;
  padding-left: 3px;
}
.splitter {
  flex: none;
  height: 5px;
  background: repeating-linear-gradient(90deg, #999 0 2px, transparent 2px 3px) center / 18px 2px no-repeat;
}
.layers {
  flex: none;
}
.layer-row {
  display: flex;
  height: 32px;
  padding: 1px 0;
}
.layer-row.opacity {
  height: 34px;
  padding: 3px 0;
}
.layer-row .combo, .layer-row .slider {
  flex: 1;
  height: auto;
}
.layer-row button {
  width: 35px;
}
.has-drop {
  position: relative;
}
.has-drop::after {
  position: absolute;
  right: 2px;
  bottom: 0;
  border-width: 3px;
  border-bottom: 0;
}
.layer-list {
  height: 204px;
  padding-top: 1px;
  padding-right: 2px;
  background: #383838;
}
.layer-list li {
  display: grid;
  grid-template-columns: 23px 29px 14px 1fr 18px 18px 18px 19px;
  column-gap: 1px;
  height: 30px;
  padding-bottom: 1px;
  border-bottom: 1px solid #3c3c3c;
}
.layer-list span {
  display: flex;
  align-items: center;
  justify-content: center;
}
.layer-list .name {
  justify-content: flex-start;
}
.layer-list .active span:not(:first-child) {
  background: #54728f;
}
.layer-list .active .dim {
  color: #8199af;
}
.layer-list .active .name {
  font-weight: 600;
}
.preview i {
  width: 23px;
  height: 23px;
  background: repeating-conic-gradient(#dcdcdc 0 25%, #fff 0 50%) 0 0 / 6px 6px;
}
.preview .narrow {
  width: 18px;
  border: 1px solid #333;
}
.preview .solid {
  height: 12px;
  background: #fff;
}
.layer-list .kind {
  flex-direction: column;
  justify-content: flex-start;
  gap: 4px;
  padding-top: 1px;
}
.k1 { width: 12px; height: 12px; }
.k2 { width: 12px; height: 9px; }
.layer-actions {
  display: flex;
  align-items: center;
  height: 31px;
  padding-left: 5px;
}
.layer-actions button {
  width: 32px;
}
.layer-actions button:first-child {
  width: 20px;
}
.onion {
  flex: 1;
  display: flex;
  flex-direction: column;
  min-height: 0;
}
.skins {
  flex: 1;
  display: flex;
  margin: 10px 11px 0 10px;
  background: #383838;
}
.skins > div {
  flex: 1 1 0;
  min-width: 0;
  display: flex;
  flex-direction: column;
  align-items: center;
  border-right: 1px solid #3d3d3d;
}
.skins > .zero {
  flex-grow: 2;
}
.skins button {
  width: 8px;
  height: 16px;
  margin: 4px 0 7px;
}
.zero button, .zero i {
  width: 24px;
}
.skins .on {
  background: #435b75;
}
.skins > .zero button {
  width: 24px;
}
.level {
  flex: 1;
  display: flex;
  align-items: flex-end;
}
.level i {
  width: 8px;
  background: #54728f;
}
.zero .level i {
  width: 24px;
}

/* timeline */
.timeline {
  display: flex;
  flex-direction: column;
  min-width: 0;
}
.timeline-bar {
  display: flex;
  align-items: center;
  height: 33px;
  flex: none;
  padding: 0 11px 0 10px;
  color: #d2d2d2;
}
.timeline-bar h2 {
  width: 185px;
}
.timeline-bar > button {
  width: 34px;
}
.timeline-bar .slider {
  height: 24px;
}
.timeline-bar .spin {
  gap: 3px;
}
.timeline-bar .frame {
  width: 68px;
  margin: 0 16px;
}
.timeline-bar .frame input {
  text-align: right;
  padding-right: 5px;
}
.timeline-bar .speed {
  width: 114px;
  margin-left: 1px;
}
.timeline-bar .dropframes {
  width: 29px;
  height: 29px;
  border: 1px solid #333;
  border-radius: 3px;
  background: #424242;
}
.timeline-bar > .cell {
  width: 30px;
}
.timeline-bar > .first {
  margin-left: 16px;
}
.timeline-bar > .end {
  margin-left: auto;
}
.timeline-bar > .gap {
  margin-left: 32px;
}
.timeline-bar > .close {
  width: 26px;
}
.timeline-body {
  flex: 1;
  display: grid;
  grid-template-columns: 222px 1fr;
  min-height: 0;
}
.tracks {
  padding: 0 2px;
}
.tracks-head {
  display: flex;
  align-items: center;
  gap: 7px;
  height: 20px;
  padding: 0 4px;
  background: #383838;
  border-top: 1px solid #606060;
}
.track {
  display: flex;
  align-items: center;
  gap: 4px;
  height: 22px;
  margin: 2px 0;
  padding: 0 3px 0 5px;
  background: #363636;
}
.track span {
  margin-left: 1px;
  margin-right: auto;
}
.track.active {
  box-shadow: 0 -2px #54728f, 0 2px #54728f;
}
.frames {
  position: relative;
  overflow: hidden;
  background: #383838;
}
.ruler {
  display: flex;
  height: 19px;
  margin-bottom: 1px;
  background: repeating-linear-gradient(90deg, #424242 0 1px, transparent 1px 8px) 0 15px / 100% 4px no-repeat, #353535;
}
.ruler span {
  flex: 0 0 48px;
  padding-left: 2px;
  line-height: 16px;
}
.row {
  height: 24px;
  background: #3a3b3c;
}
.keys {
  display: flex;
}
.keys i {
  flex: 0 0 7px;
  height: 23px;
  margin-right: 1px;
  background: linear-gradient(#54728f, #54728f) 0 11px / 100% 1px no-repeat, #3c4348;
}
.keys .key {
  background: #54728f;
}
.keys .hold {
  background: repeating-linear-gradient(45deg, #54728f 0 4px, #8ba1b5 4px 7px);
}
.playhead {
  position: absolute;
  top: 15px;
  left: 1688px;
  width: 7px;
  height: 100px;
  border: 2px solid #df9430;
  border-top-width: 4px;
  border-bottom: 0;
  background: linear-gradient(#df9430, #df9430) 0 58px / 100% 5px no-repeat;
}
.hscroll {
  flex: none;
  height: 6px;
  padding-left: 910px;
  background: #404040;
  border-top: 1px solid #303030;
}
.hscroll .thumb {
  display: block;
  width: 574px;
  height: 5px;
  background: #484848;
  border: 1px solid #606060;
  border-bottom: 0;
}

/* taskbar */
.taskbar {
  display: flex;
  background: #282828;
  color: #fff;
}
.taskbar > button {
  width: 48px;
  margin-right: 1px;
}
.taskbar > .alice {
  width: 56px;
  margin-right: 5px;
  padding-left: 3px;
}
.taskbar > .run {
  background: linear-gradient(#76b9ed, #76b9ed) center bottom / 40px 2px no-repeat;
}
.taskbar > .discord {
  background: linear-gradient(#ff7b00, #ff7b00) center bottom / 100% 2px no-repeat, #a9632c;
}
.taskbar > .current {
  background: linear-gradient(#76b9ed, #76b9ed) center bottom / 100% 2px no-repeat, #555;
}
.tray {
  margin-left: auto;
  display: flex;
  align-items: center;
  gap: 8px;
  padding-right: 4px;
}
.tray > svg, .notes svg {
  fill: none;
  stroke: #fff;
}
.tray time {
  text-align: center;
  line-height: 18px;
  margin: 0 10px 0 4px;
}
.notes {
  position: relative;
  width: 36px;
  height: 40px;
  padding: 0 20px 2px 0;
  border-right: 1px solid #777;
}
.notes svg {
  flex: none;
}
.notes span {
  position: absolute;
  right: 12px;
  bottom: 4px;
  width: 17px;
  border: 1px solid #888;
  border-radius: 50%;
  background: #282828;
}

/* error box */
.dialog {
  position: absolute;
  left: calc(50% - 134px);
  top: 466px;
  width: 259px;
  border: 1px solid #6c6c6c;
  background: #474747;
  box-shadow: 0 4px 16px rgba(0, 0, 0, .4);
}
.dialog-title {
  display: flex;
  align-items: center;
  gap: 6px;
  height: 25px;
  padding: 0 9px 1px 4px;
  background: #fff;
  color: #000;
}
.dialog-title button {
  margin-left: auto;
}
.dialog-body {
  display: grid;
  grid-template-columns: 50px 1fr;
  padding: 11px 11px 11px 12px;
}
.dialog-body p {
  white-space: nowrap;
}
.dialog .ok {
  grid-column: 2;
  justify-self: end;
  width: 80px;
  height: 23px;
  margin-top: 12px;
  border: 1px solid #3c5063;
  border-radius: 3px;
  background: linear-gradient(#50555a, #3f4346);
  box-shadow: inset 0 0 0 1px #586068;
}
```
